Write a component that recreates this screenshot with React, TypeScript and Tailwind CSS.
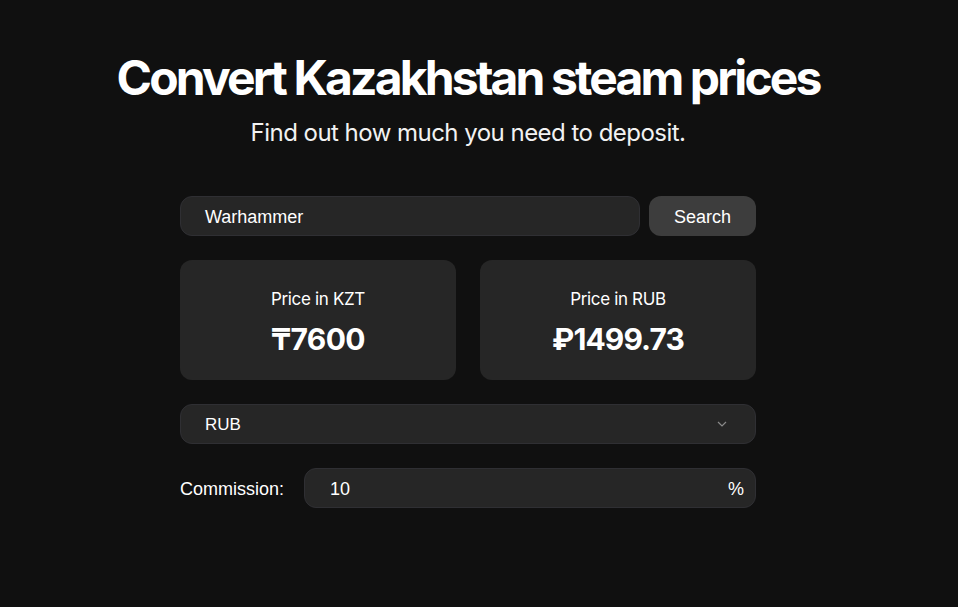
import React from "react";

export default function App() {
  return (
    <div className="min-h-[607px] w-full bg-[#101010] text-white">
      <div className="w-[936px] flex flex-col items-center">
        <h1 className="mt-[54px] text-[48px] leading-none font-bold tracking-[-0.06em] font-['Inter',sans-serif]">
          Convert Kazakhstan steam prices
        </h1>
        <p className="mt-[15px] text-2xl leading-8 font-['Inter',sans-serif] tracking-[-0.022em] text-[#f2f2f2]">
          Find out how much you need to deposit.
        </p>
        <div className="mt-[47px] w-[576px] flex flex-col gap-6">
          <div className="flex gap-[9px] h-10">
            <div className="flex-1 h-10 rounded-xl bg-[#262626] border border-[#2f2f33] flex items-center pl-6 pt-[2px] text-[18px] font-['Liberation_Sans',Arial,sans-serif]">
              Warhammer
            </div>
            <button className="w-[107px] h-10 rounded-xl bg-[#3d3d3d] pt-[2px] text-[18px] font-['Liberation_Sans',Arial,sans-serif]">
              Search
            </button>
          </div>
          <div className="grid grid-cols-2 gap-6">
            <div className="h-[120px] rounded-xl bg-[#262626] flex flex-col items-center justify-center pt-[3px] font-['Inter',sans-serif]">
              <div className="text-[17px] tracking-[-0.02em] leading-6">Price in KZT</div>
              <div className="mt-[10px] text-[30px] font-bold leading-9 tracking-[-0.02em]">₸7600</div>
            </div>
            <div className="h-[120px] rounded-xl bg-[#262626] flex flex-col items-center justify-center pt-[3px] font-['Inter',sans-serif]">
              <div className="text-[17px] tracking-[-0.02em] leading-6">Price in RUB</div>
              <div className="mt-[10px] text-[30px] font-bold leading-9 tracking-[-0.03em]">₽1499.73</div>
            </div>
          </div>
          <div className="h-10 rounded-xl bg-[#262626] border border-[#2f2f33] flex items-center pl-6 pr-[28px] pt-[2px] text-[17px] font-['Liberation_Sans',Arial,sans-serif]">
            <span className="flex-1">RUB</span>
            <svg width="10" height="6" viewBox="0 0 10 6" fill="none" className="-mt-[2px]">
              <path d="M1 1l4 4 4-4" stroke="#8a8a8a" strokeWidth="1.2" />
            </svg>
          </div>
          <div className="flex items-center gap-5 font-['Liberation_Sans',Arial,sans-serif] text-[18px]">
            <span className="pt-[2px]">Commission:</span>
            <div className="flex-1 h-10 rounded-xl bg-[#262626] border border-[#2f2f33] flex items-center pl-[25px] pr-[11px] pt-[2px]">
              <span className="flex-1">10</span>
              <span>%</span>
            </div>
          </div>
        </div>
      </div>
    </div>
  );
}
